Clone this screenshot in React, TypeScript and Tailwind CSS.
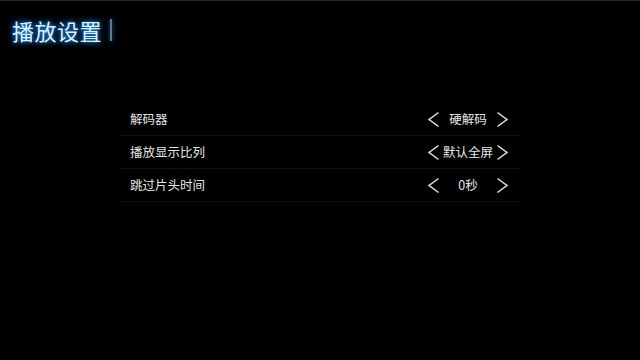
import React from "react";

const rows = [
  { label: "解码器", value: "硬解码" },
  { label: "播放显示比列", value: "默认全屏" },
  { label: "跳过片头时间", value: "0秒" },
];

function Chevron({ dir }: { dir: "l" | "r" }) {
  return (
    <svg width="13" height="17" viewBox="0 0 13 17" className="shrink-0">
      <path
        d={dir === "l" ? "M11.5 1.5 L2 8.5 L11.5 15.5" : "M1.5 1.5 L11 8.5 L1.5 15.5"}
        fill="none"
        stroke="#e8e8e8"
        strokeWidth="1.4"
      />
    </svg>
  );
}

export default function App() {
  return (
    <div
      className="w-[640px] h-[360px] bg-black overflow-hidden border-t border-[#2a2a2a] relative"
      style={{ fontFamily: '"Noto Sans CJK SC", "Noto Sans", sans-serif' }}
    >
      <div className="flex items-center pl-[12px] pt-[14px]">
        <span
          className="text-[22px] leading-[30px] text-[#dff3ff] tracking-[0.5px]"
          style={{ textShadow: "0 0 4px #1e90ff, 0 0 8px #1565c0" }}
        >
          播放设置
        </span>
        <div className="ml-[8px] w-[2px] h-[22px] bg-[#5a7a95] shadow-[0_0_4px_#1e6fb0]" />
      </div>
      <div className="ml-[120px] mt-[58px] w-[400px] flex flex-col">
        {rows.map((r) => (
          <div
            key={r.label}
            className="h-[33px] flex items-center border-b border-[#111111] pl-[10px] pr-[11px]"
          >
            <span className="text-[12.5px] text-[#e6e6e6] flex-1">{r.label}</span>
            <div className="flex items-center w-[82px] justify-between">
              <Chevron dir="l" />
              <span className="text-[12.5px] text-[#e6e6e6]">{r.value}</span>
              <Chevron dir="r" />
            </div>
          </div>
        ))}
      </div>
    </div>
  );
}
